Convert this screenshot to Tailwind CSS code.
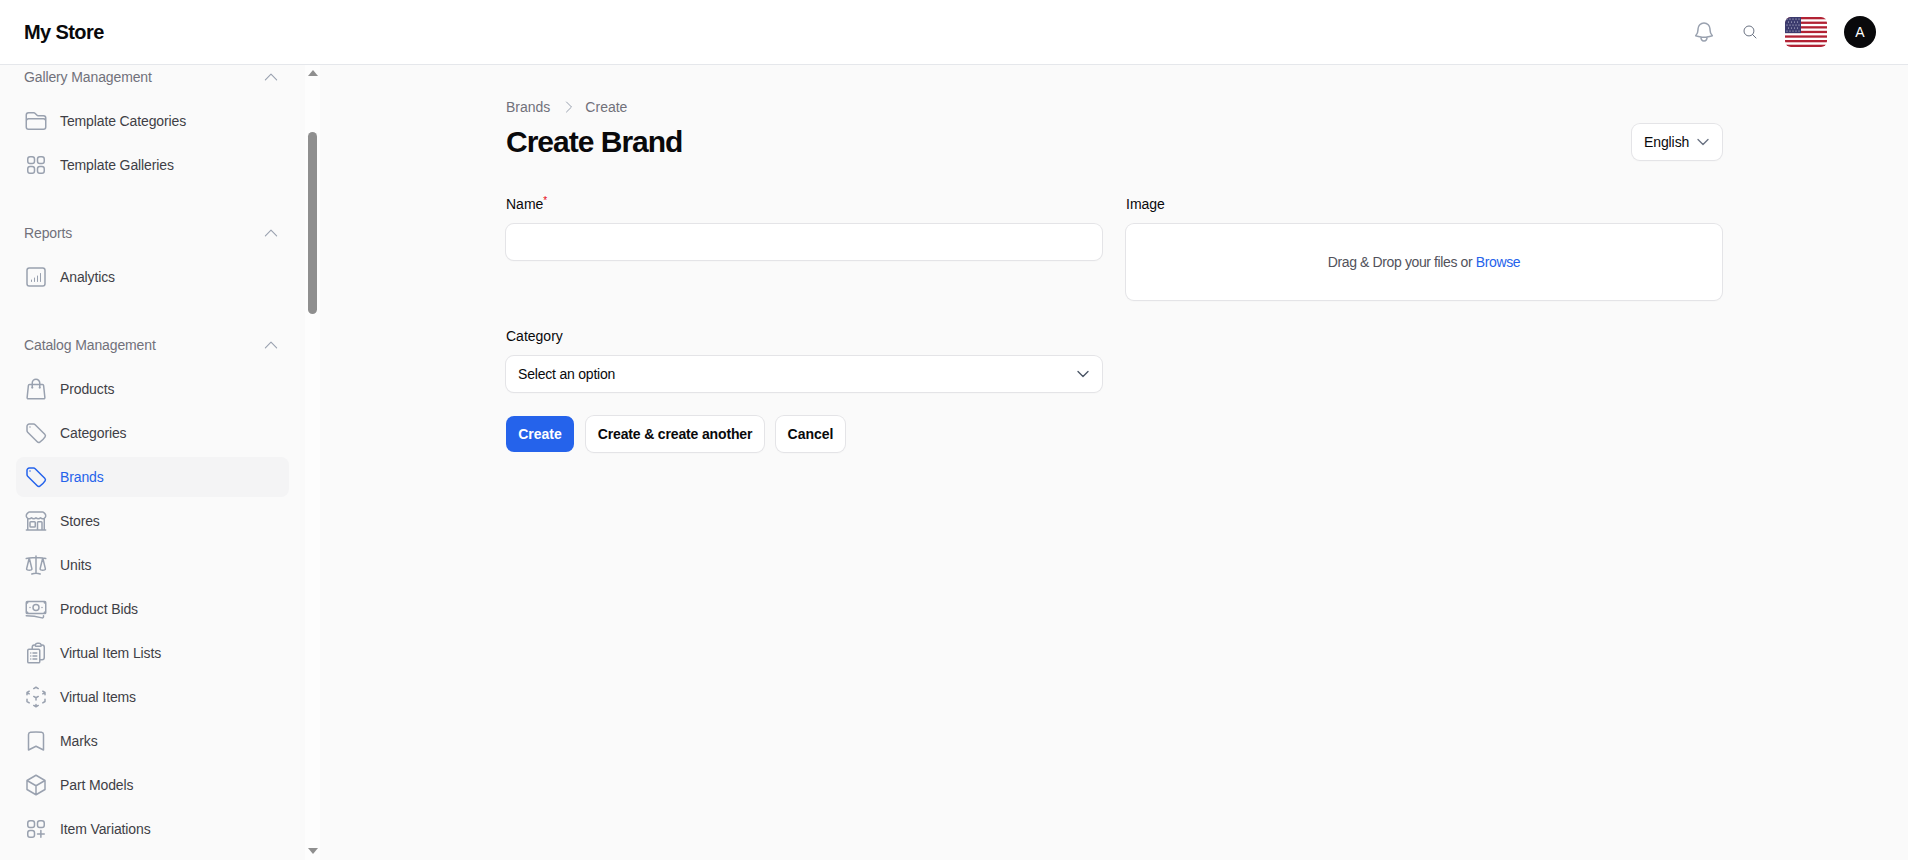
<!DOCTYPE html>
<html lang="en">
<head>
    <meta charset="UTF-8">
    <meta name="viewport" content="width=device-width, initial-scale=1.0">
    <title>Create Brand - My Store</title>
    <script src="https://cdn.jsdelivr.net/npm/@tailwindcss/browser@4"></script>
</head>
<body class="h-[860px] overflow-hidden bg-[#fafafa] font-['Liberation_Sans',sans-serif] text-[#09090b]">
    <!-- top bar -->
    <header class="h-[65px] bg-white border-b border-[#e5e7eb] flex items-center pl-6 pr-8">
        <div class="text-xl font-bold tracking-[-0.6px]">My Store</div>
        <div class="ml-auto flex items-center">
            <svg class="w-6 h-6 text-gray-400" fill="none" viewBox="0 0 24 24" stroke="currentColor" stroke-width="1.5" stroke-linecap="round" stroke-linejoin="round"><path d="M14.857 17.082a23.848 23.848 0 005.454-1.31A8.967 8.967 0 0118 9.75v-.7V9A6 6 0 006 9v.75a8.967 8.967 0 01-2.312 6.022c1.733.64 3.56 1.085 5.455 1.31m5.714 0a24.255 24.255 0 01-5.714 0m5.714 0a3 3 0 11-5.714 0"/></svg>
            <svg class="w-4 h-4 ml-[26px] text-gray-500" fill="none" viewBox="0 0 24 24" stroke="currentColor" stroke-width="1.5" stroke-linecap="round" stroke-linejoin="round"><path d="M21 21l-5.197-5.197m0 0A7.5 7.5 0 105.196 5.196a7.5 7.5 0 0010.607 10.607z"/></svg>
            <svg class="w-[42px] h-[30px] ml-[27px] rounded-md" viewBox="0 0 42 30">
                <rect width="42" height="30" fill="#fff"/>
                <g fill="#b22234">
                    <rect y="0" width="42" height="2.3"/>
                    <rect y="4.6" width="42" height="2.3"/>
                    <rect y="9.2" width="42" height="2.3"/>
                    <rect y="13.8" width="42" height="2.3"/>
                    <rect y="18.4" width="42" height="2.3"/>
                    <rect y="23" width="42" height="2.3"/>
                    <rect y="27.7" width="42" height="2.3"/>
                </g>
                <rect width="16" height="16.1" fill="#3c3b6e"/>
                <g fill="#d5d5e6">
                    <circle cx="2" cy="2" r=".6"/><circle cx="5" cy="2" r=".6"/><circle cx="8" cy="2" r=".6"/><circle cx="11" cy="2" r=".6"/><circle cx="14" cy="2" r=".6"/>
                    <circle cx="3.5" cy="5" r=".6"/><circle cx="6.5" cy="5" r=".6"/><circle cx="9.5" cy="5" r=".6"/><circle cx="12.5" cy="5" r=".6"/>
                    <circle cx="2" cy="8" r=".6"/><circle cx="5" cy="8" r=".6"/><circle cx="8" cy="8" r=".6"/><circle cx="11" cy="8" r=".6"/><circle cx="14" cy="8" r=".6"/>
                    <circle cx="3.5" cy="11" r=".6"/><circle cx="6.5" cy="11" r=".6"/><circle cx="9.5" cy="11" r=".6"/><circle cx="12.5" cy="11" r=".6"/>
                    <circle cx="2" cy="14" r=".6"/><circle cx="5" cy="14" r=".6"/><circle cx="8" cy="14" r=".6"/><circle cx="11" cy="14" r=".6"/><circle cx="14" cy="14" r=".6"/>
                </g>
            </svg>
            <div class="w-8 h-8 ml-[17px] rounded-full bg-[#09090b] text-white text-sm flex items-center justify-center">A</div>
        </div>
    </header>

    <div class="flex h-[795px]">
        <!-- sidebar -->
        <aside class="w-[320px] flex shrink-0 overflow-hidden">
            <nav class="w-[305px] shrink-0 pl-4 pr-[16px] text-sm text-[#3f3f46] tracking-[-0.12px]">
                <div class="h-6 flex items-center justify-between pl-2 pr-[9px] text-[#71717a]">
                    <span>Gallery Management</span>
                    <svg class="w-[18px] h-[18px] text-gray-400" fill="none" viewBox="0 0 24 24" stroke="currentColor" stroke-width="1.5" stroke-linecap="round" stroke-linejoin="round"><path d="M4.5 15.75l7.5-7.5 7.5 7.5"/></svg>
                </div>
                <ul class="mt-3 flex flex-col gap-1">
                    <li class="h-10 flex items-center gap-3 px-2">
                        <svg class="w-6 h-6 text-gray-400" fill="none" viewBox="0 0 24 24" stroke="currentColor" stroke-width="1.5" stroke-linecap="round" stroke-linejoin="round"><path d="M2.25 12.75V12A2.25 2.25 0 014.5 9.75h15A2.25 2.25 0 0121.75 12v.75m-8.69-6.44l-2.12-2.12a1.5 1.5 0 00-1.061-.44H4.5A2.25 2.25 0 002.25 6v12a2.25 2.25 0 002.25 2.25h15A2.25 2.25 0 0021.75 18V9a2.25 2.25 0 00-2.25-2.25h-5.379a1.5 1.5 0 01-1.06-.44z"/></svg>
                        Template Categories
                    </li>
                    <li class="h-10 flex items-center gap-3 px-2">
                        <svg class="w-6 h-6 text-gray-400" fill="none" viewBox="0 0 24 24" stroke="currentColor" stroke-width="1.5" stroke-linecap="round" stroke-linejoin="round"><path d="M3.75 6A2.25 2.25 0 016 3.75h2.25A2.25 2.25 0 0110.5 6v2.25a2.25 2.25 0 01-2.25 2.25H6a2.25 2.25 0 01-2.25-2.25V6zM3.75 15.75A2.25 2.25 0 016 13.5h2.25a2.25 2.25 0 012.25 2.25V18a2.25 2.25 0 01-2.25 2.25H6A2.25 2.25 0 013.75 18v-2.25zM13.5 6a2.25 2.25 0 012.25-2.25H18A2.25 2.25 0 0120.25 6v2.25A2.25 2.25 0 0118 10.5h-2.25a2.25 2.25 0 01-2.25-2.25V6zM13.5 15.75a2.25 2.25 0 012.25-2.25H18a2.25 2.25 0 012.25 2.25V18A2.25 2.25 0 0118 20.25h-2.25A2.25 2.25 0 0113.5 18v-2.25z"/></svg>
                        Template Galleries
                    </li>
                </ul>

                <div class="h-6 mt-9 flex items-center justify-between pl-2 pr-[9px] text-[#71717a]">
                    <span>Reports</span>
                    <svg class="w-[18px] h-[18px] text-gray-400" fill="none" viewBox="0 0 24 24" stroke="currentColor" stroke-width="1.5" stroke-linecap="round" stroke-linejoin="round"><path d="M4.5 15.75l7.5-7.5 7.5 7.5"/></svg>
                </div>
                <ul class="mt-3 flex flex-col gap-1">
                    <li class="h-10 flex items-center gap-3 px-2">
                        <svg class="w-6 h-6 text-gray-400" fill="none" viewBox="0 0 24 24" stroke="currentColor" stroke-width="1.5" stroke-linecap="round" stroke-linejoin="round"><rect x="3" y="3" width="18" height="18" rx="2.25"/><path stroke-width="1" d="M7.5 16.5v-1.5M10.5 16.5v-3.5M13.5 16.5v-5.5M16.5 16.5v-8"/></svg>
                        Analytics
                    </li>
                </ul>

                <div class="h-6 mt-9 flex items-center justify-between pl-2 pr-[9px] text-[#71717a]">
                    <span>Catalog Management</span>
                    <svg class="w-[18px] h-[18px] text-gray-400" fill="none" viewBox="0 0 24 24" stroke="currentColor" stroke-width="1.5" stroke-linecap="round" stroke-linejoin="round"><path d="M4.5 15.75l7.5-7.5 7.5 7.5"/></svg>
                </div>
                <ul class="mt-3 flex flex-col gap-1">
                    <li class="h-10 flex items-center gap-3 px-2">
                        <svg class="w-6 h-6 text-gray-400" fill="none" viewBox="0 0 24 24" stroke="currentColor" stroke-width="1.5" stroke-linecap="round" stroke-linejoin="round"><path d="M15.75 10.5V6a3.75 3.75 0 10-7.5 0v4.5m11.356-1.993l1.263 12c.07.665-.45 1.243-1.119 1.243H4.25a1.125 1.125 0 01-1.12-1.243l1.264-12A1.125 1.125 0 015.513 7.5h12.974c.576 0 1.059.435 1.119 1.007zM8.625 10.5a.375.375 0 11-.75 0 .375.375 0 01.75 0zm7.5 0a.375.375 0 11-.75 0 .375.375 0 01.75 0z"/></svg>
                        Products
                    </li>
                    <li class="h-10 flex items-center gap-3 px-2">
                        <svg class="w-6 h-6 text-gray-400" fill="none" viewBox="0 0 24 24" stroke="currentColor" stroke-width="1.5" stroke-linecap="round" stroke-linejoin="round"><path d="M9.568 3H5.25A2.25 2.25 0 003 5.25v4.318c0 .597.237 1.17.659 1.591l9.581 9.581c.699.699 1.78.872 2.607.33a18.095 18.095 0 005.223-5.223c.542-.827.369-1.908-.33-2.607L11.16 3.66A2.25 2.25 0 009.568 3z"/><path d="M6 6h.008v.008H6V6z"/></svg>
                        Categories
                    </li>
                    <li class="h-10 flex items-center gap-3 px-2 rounded-lg bg-[#f4f4f5] text-[#2563eb]">
                        <svg class="w-6 h-6 text-[#2563eb]" fill="none" viewBox="0 0 24 24" stroke="currentColor" stroke-width="1.5" stroke-linecap="round" stroke-linejoin="round"><path d="M9.568 3H5.25A2.25 2.25 0 003 5.25v4.318c0 .597.237 1.17.659 1.591l9.581 9.581c.699.699 1.78.872 2.607.33a18.095 18.095 0 005.223-5.223c.542-.827.369-1.908-.33-2.607L11.16 3.66A2.25 2.25 0 009.568 3z"/><path d="M6 6h.008v.008H6V6z"/></svg>
                        Brands
                    </li>
                    <li class="h-10 flex items-center gap-3 px-2">
                        <svg class="w-6 h-6 text-gray-400" fill="none" viewBox="0 0 24 24" stroke="currentColor" stroke-width="1.5" stroke-linecap="round" stroke-linejoin="round"><path d="M13.5 21v-7.5a.75.75 0 01.75-.75h3a.75.75 0 01.75.75V21m-4.5 0H2.36m11.14 0H18m0 0h3.64m-1.39 0V9.349m-16.5 11.65V9.35m0 0a3.001 3.001 0 003.75-.615A2.993 2.993 0 009.75 9.75c.896 0 1.7-.393 2.25-1.016a2.993 2.993 0 002.25 1.016c.896 0 1.7-.393 2.25-1.016a3.001 3.001 0 003.75.614m-16.5 0a3.004 3.004 0 01-.621-4.72L4.318 3.44A1.5 1.5 0 015.378 3h13.243a1.5 1.5 0 011.06.44l1.19 1.189a3 3 0 01-.621 4.72m-13.5 8.65h3.75a.75.75 0 00.75-.75V13.5a.75.75 0 00-.75-.75H6.75a.75.75 0 00-.75.75v3.75c0 .415.336.75.75.75z"/></svg>
                        Stores
                    </li>
                    <li class="h-10 flex items-center gap-3 px-2">
                        <svg class="w-6 h-6 text-gray-400" fill="none" viewBox="0 0 24 24" stroke="currentColor" stroke-width="1.5" stroke-linecap="round" stroke-linejoin="round"><path d="M12 3v17.25m0 0c-1.472 0-2.882.265-4.185.75M12 20.25c1.472 0 2.882.265 4.185.75M18.75 4.97A48.416 48.416 0 0012 4.5c-2.291 0-4.545.16-6.75.47m13.5 0c1.01.143 2.01.317 3 .52m-3-.52l2.62 10.726c.122.499-.106 1.028-.589 1.202a5.988 5.988 0 01-2.031.352 5.988 5.988 0 01-2.031-.352c-.483-.174-.711-.703-.59-1.202L18.75 4.97zm-16.5.52c.99-.203 1.99-.377 3-.52m0 0l2.62 10.726c.122.499-.106 1.028-.589 1.202a5.989 5.989 0 01-2.031.352 5.989 5.989 0 01-2.031-.352c-.483-.174-.711-.703-.59-1.202L5.25 4.97z"/></svg>
                        Units
                    </li>
                    <li class="h-10 flex items-center gap-3 px-2">
                        <svg class="w-6 h-6 text-gray-400" fill="none" viewBox="0 0 24 24" stroke="currentColor" stroke-width="1.5" stroke-linecap="round" stroke-linejoin="round"><path d="M2.25 18.75a60.07 60.07 0 0115.797 2.101c.727.198 1.453-.342 1.453-1.096V18.75M3.75 4.5v.75A.75.75 0 013 6h-.75m0 0v-.375c0-.621.504-1.125 1.125-1.125H20.25M2.25 6v9m18-10.5v.75c0 .414.336.75.75.75h.75m-1.5-1.5h.375c.621 0 1.125.504 1.125 1.125v9.75c0 .621-.504 1.125-1.125 1.125h-.375m1.5-1.5H21a.75.75 0 00-.75.75v.75m0 0H3.75m0 0h-.375a1.125 1.125 0 01-1.125-1.125V15m1.5 1.5v-.75A.75.75 0 003 15h-.75M15 10.5a3 3 0 11-6 0 3 3 0 016 0zm3 0h.008v.008H18V10.5zm-12 0h.008v.008H6V10.5z"/></svg>
                        Product Bids
                    </li>
                    <li class="h-10 flex items-center gap-3 px-2">
                        <svg class="w-6 h-6 text-gray-400" fill="none" viewBox="0 0 24 24" stroke="currentColor" stroke-width="1.5" stroke-linecap="round" stroke-linejoin="round"><path d="M9 12h3.75M9 15h3.75M9 18h3.75m3 .75H18a2.25 2.25 0 002.25-2.25V6.108c0-1.135-.845-2.098-1.976-2.192a48.424 48.424 0 00-1.123-.08m-5.801 0c-.065.21-.1.433-.1.664 0 .414.336.75.75.75h4.5a.75.75 0 00.75-.75 2.25 2.25 0 00-.1-.664m-5.8 0A2.251 2.251 0 0113.5 2.25H15c1.012 0 1.867.668 2.15 1.586m-5.8 0c-.376.023-.75.05-1.124.08C9.095 4.01 8.25 4.973 8.25 6.108V8.25m0 0H4.875c-.621 0-1.125.504-1.125 1.125v11.25c0 .621.504 1.125 1.125 1.125h9.75c.621 0 1.125-.504 1.125-1.125V9.375c0-.621-.504-1.125-1.125-1.125H8.25zM6.75 12h.008v.008H6.75V12zm0 3h.008v.008H6.75V15zm0 3h.008v.008H6.75V18z"/></svg>
                        Virtual Item Lists
                    </li>
                    <li class="h-10 flex items-center gap-3 px-2">
                        <svg class="w-6 h-6 text-gray-400" fill="none" viewBox="0 0 24 24" stroke="currentColor" stroke-width="1.5" stroke-linecap="round" stroke-linejoin="round"><path d="M21 7.5l-2.25-1.313M21 7.5v2.25m0-2.25l-2.25 1.313M3 7.5l2.25-1.313M3 7.5l2.25 1.313M3 7.5v2.25m9 3l2.25-1.313M12 12.75l-2.25-1.313M12 12.75V15m0 6.75l2.25-1.313M12 21.75V19.5m0 2.25l-2.25-1.313m0-16.875L12 2.25l2.25 1.313M21 14.25v2.25l-2.25 1.313m-13.5 0L3 16.5v-2.25"/></svg>
                        Virtual Items
                    </li>
                    <li class="h-10 flex items-center gap-3 px-2">
                        <svg class="w-6 h-6 text-gray-400" fill="none" viewBox="0 0 24 24" stroke="currentColor" stroke-width="1.5" stroke-linecap="round" stroke-linejoin="round"><path d="M17.593 3.322c1.1.128 1.907 1.077 1.907 2.185V21L12 17.25 4.5 21V5.507c0-1.108.806-2.057 1.907-2.185a48.507 48.507 0 0111.186 0z"/></svg>
                        Marks
                    </li>
                    <li class="h-10 flex items-center gap-3 px-2">
                        <svg class="w-6 h-6 text-gray-400" fill="none" viewBox="0 0 24 24" stroke="currentColor" stroke-width="1.5" stroke-linecap="round" stroke-linejoin="round"><path d="M21 7.5l-9-5.25L3 7.5m18 0l-9 5.25m9-5.25v9l-9 5.25M3 7.5l9 5.25M3 7.5v9l9 5.25m0-9v9"/></svg>
                        Part Models
                    </li>
                    <li class="h-10 flex items-center gap-3 px-2">
                        <svg class="w-6 h-6 text-gray-400" fill="none" viewBox="0 0 24 24" stroke="currentColor" stroke-width="1.5" stroke-linecap="round" stroke-linejoin="round"><path d="M13.5 16.875h3.375m0 0h3.375m-3.375 0V13.5m0 3.375v3.375M6 10.5h2.25a2.25 2.25 0 002.25-2.25V6a2.25 2.25 0 00-2.25-2.25H6A2.25 2.25 0 003.75 6v2.25A2.25 2.25 0 006 10.5zm0 9.75h2.25A2.25 2.25 0 0010.5 18v-2.25a2.25 2.25 0 00-2.25-2.25H6a2.25 2.25 0 00-2.25 2.25V18A2.25 2.25 0 006 20.25zm9.75-9.75H18a2.25 2.25 0 002.25-2.25V6A2.25 2.25 0 0018 3.75h-2.25A2.25 2.25 0 0013.5 6v2.25a2.25 2.25 0 002.25 2.25z"/></svg>
                        Item Variations
                    </li>
                </ul>
            </nav>
            <!-- scrollbar -->
            <div class="w-[15px] h-[795px] bg-[#fdfdfd] flex flex-col items-center">
                <svg class="w-[10px] h-[6px] mt-[5px] text-[#8f8f8f]" viewBox="0 0 10 6" fill="currentColor"><path d="M5 0l5 6H0z"/></svg>
                <div class="w-[9px] h-[182px] mt-[56px] rounded-full bg-[#8f8f8f]"></div>
                <svg class="w-[10px] h-[6px] mt-[534px] text-[#8f8f8f]" viewBox="0 0 10 6" fill="currentColor"><path d="M5 6l5-6H0z"/></svg>
            </div>
        </aside>

        <!-- main -->
        <main class="flex-1 min-w-0">
            <div class="w-[1216px] mx-auto pt-8">
                <div class="flex items-center h-5 text-sm text-[#71717a]">
                    <span>Brands</span>
                    <svg class="w-4 h-4 ml-[11px] mr-2 text-gray-400" fill="none" viewBox="0 0 24 24" stroke="currentColor" stroke-width="1.5" stroke-linecap="round" stroke-linejoin="round"><path d="M8.25 4.5l7.5 7.5-7.5 7.5"/></svg>
                    <span>Create</span>
                </div>
                <div class="flex items-start justify-between mt-[7px]">
                    <h1 class="text-3xl leading-9 font-bold tracking-[-1px]">Create Brand</h1>
                    <button class="h-[36px] w-[90px] pl-3 bg-white rounded-lg ring-1 ring-[#e4e4e7] shadow-xs flex items-center gap-[6px] text-sm tracking-[-0.1px]">
                        English
                        <svg class="w-4 h-4 text-gray-500" fill="none" viewBox="0 0 24 24" stroke="currentColor" stroke-width="2" stroke-linecap="round" stroke-linejoin="round"><path d="M19.5 8.25l-7.5 7.5-7.5-7.5"/></svg>
                    </button>
                </div>

                <form class="mt-[34px]">
                    <div class="grid grid-cols-2 gap-x-6 gap-y-[26px] items-start">
                        <div>
                            <label class="block h-5 text-sm leading-5">Name<sup class="text-red-600 text-[10px]">*</sup></label>
                            <input type="text" class="block w-full h-9 mt-[10px] bg-white rounded-lg ring-1 ring-[#e4e4e7] shadow-xs outline-none">
                        </div>
                        <div>
                            <label class="block h-5 text-sm leading-5">Image</label>
                            <div class="h-[76px] mt-[10px] bg-white rounded-lg ring-1 ring-[#e4e4e7] shadow-xs flex items-center justify-center text-sm tracking-[-0.38px] text-[#52525b]">
                                <span>Drag &amp; Drop your files or <span class="text-[#2563eb]">Browse</span></span>
                            </div>
                        </div>
                        <div>
                            <label class="block h-5 text-sm leading-5">Category</label>
                            <div class="h-9 mt-[10px] px-3 bg-white rounded-lg ring-1 ring-[#e4e4e7] shadow-xs flex items-center justify-between text-sm tracking-[-0.2px]">
                                <span>Select an option</span>
                                <svg class="w-4 h-4 -mr-px text-gray-600" fill="none" viewBox="0 0 24 24" stroke="currentColor" stroke-width="2" stroke-linecap="round" stroke-linejoin="round"><path d="M19.5 8.25l-7.5 7.5-7.5-7.5"/></svg>
                            </div>
                        </div>
                    </div>
                    <div class="flex gap-3 mt-6 text-sm font-bold">
                        <button type="button" class="h-9 w-[68px] rounded-lg bg-[#2563eb] text-white">Create</button>
                        <button type="button" class="h-9 w-[178px] rounded-lg bg-white ring-1 ring-[#e4e4e7] shadow-xs tracking-[-0.15px]">Create &amp; create another</button>
                        <button type="button" class="h-9 w-[69px] rounded-lg bg-white ring-1 ring-[#e4e4e7] shadow-xs">Cancel</button>
                    </div>
                </form>
            </div>
        </main>
    </div>
</body>
</html>
